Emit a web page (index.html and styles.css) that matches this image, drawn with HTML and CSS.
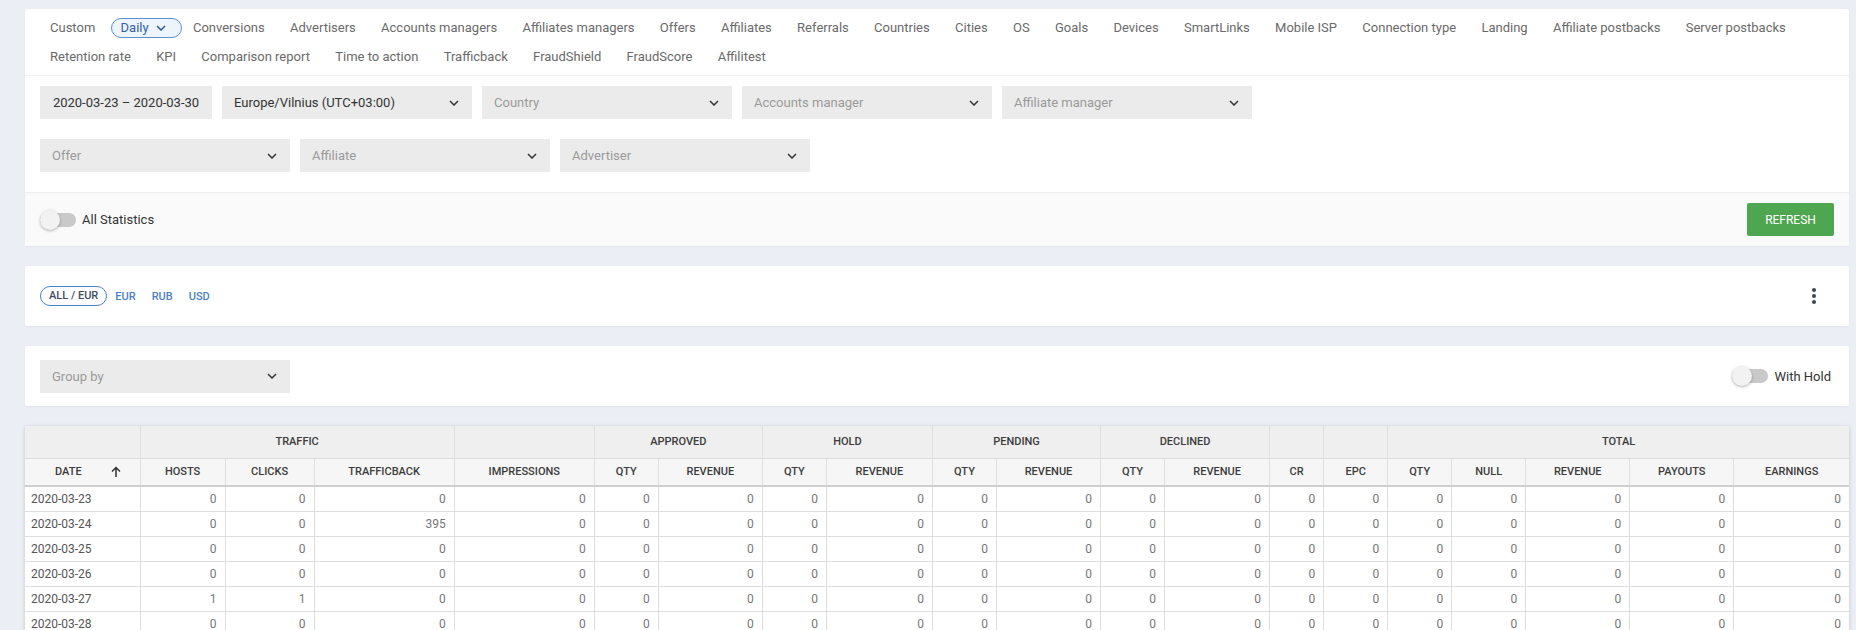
FILE: index.html
```html
<!DOCTYPE html>
<html>
<head>
<meta charset="utf-8">
<link rel="stylesheet" href="styles.css">
</head>
<body>
<div class="card top-card">
  <nav class="tabs">
    <span class="tab">Custom</span>
    <span class="tab tab-active">Daily <svg class="chev-sm" viewBox="0 0 10 6" width="10" height="6"><polyline points="1,1 5,5 9,1"/></svg></span>
    <span class="tab">Conversions</span>
    <span class="tab">Advertisers</span>
    <span class="tab">Accounts managers</span>
    <span class="tab">Affiliates managers</span>
    <span class="tab">Offers</span>
    <span class="tab">Affiliates</span>
    <span class="tab">Referrals</span>
    <span class="tab">Countries</span>
    <span class="tab">Cities</span>
    <span class="tab">OS</span>
    <span class="tab">Goals</span>
    <span class="tab">Devices</span>
    <span class="tab">SmartLinks</span>
    <span class="tab">Mobile ISP</span>
    <span class="tab">Connection type</span>
    <span class="tab">Landing</span>
    <span class="tab">Affiliate postbacks</span>
    <span class="tab">Server postbacks</span>
    <span class="tab">Retention rate</span>
    <span class="tab">KPI</span>
    <span class="tab">Comparison report</span>
    <span class="tab">Time to action</span>
    <span class="tab">Trafficback</span>
    <span class="tab">FraudShield</span>
    <span class="tab">FraudScore</span>
    <span class="tab">Affilitest</span>
  </nav>
  <div class="filters">
    <div class="filter-row">
      <div class="field field-date">2020-03-23 – 2020-03-30</div>
      <div class="field field-select"><span class="val">Europe/Vilnius (UTC+03:00)</span><svg class="chev" viewBox="0 0 10 6" width="10" height="6"><polyline points="1,1 5,5 9,1"/></svg></div>
      <div class="field field-select"><span class="ph">Country</span><svg class="chev" viewBox="0 0 10 6" width="10" height="6"><polyline points="1,1 5,5 9,1"/></svg></div>
      <div class="field field-select"><span class="ph">Accounts manager</span><svg class="chev" viewBox="0 0 10 6" width="10" height="6"><polyline points="1,1 5,5 9,1"/></svg></div>
      <div class="field field-select"><span class="ph">Affiliate manager</span><svg class="chev" viewBox="0 0 10 6" width="10" height="6"><polyline points="1,1 5,5 9,1"/></svg></div>
    </div>
    <div class="filter-row row2">
      <div class="field field-select"><span class="ph">Offer</span><svg class="chev" viewBox="0 0 10 6" width="10" height="6"><polyline points="1,1 5,5 9,1"/></svg></div>
      <div class="field field-select"><span class="ph">Affiliate</span><svg class="chev" viewBox="0 0 10 6" width="10" height="6"><polyline points="1,1 5,5 9,1"/></svg></div>
      <div class="field field-select"><span class="ph">Advertiser</span><svg class="chev" viewBox="0 0 10 6" width="10" height="6"><polyline points="1,1 5,5 9,1"/></svg></div>
    </div>
  </div>
  <div class="card-footer">
    <label class="toggle"><span class="switch"><span class="knob"></span></span><span class="toggle-label">All Statistics</span></label>
    <button class="btn-refresh">REFRESH</button>
  </div>
</div>

<div class="card bar-card">
  <div class="currencies">
    <span class="cur cur-active">ALL / EUR</span>
    <span class="cur">EUR</span>
    <span class="cur">RUB</span>
    <span class="cur">USD</span>
  </div>
  <div class="kebab"><i></i><i></i><i></i></div>
</div>

<div class="card bar-card group-card">
  <div class="field field-select"><span class="ph">Group by</span><svg class="chev" viewBox="0 0 10 6" width="10" height="6"><polyline points="1,1 5,5 9,1"/></svg></div>
  <label class="toggle"><span class="switch"><span class="knob"></span></span><span class="toggle-label">With Hold</span></label>
</div>

<div class="table-card">
  <table class="stats">
    <colgroup>
      <col style="width:115px"><col style="width:85px"><col style="width:89px"><col style="width:140px"><col style="width:140px">
      <col style="width:64px"><col style="width:104px"><col style="width:64px"><col style="width:106px"><col style="width:64px">
      <col style="width:104px"><col style="width:64px"><col style="width:105px"><col style="width:54px"><col style="width:64px">
      <col style="width:64px"><col style="width:74px"><col style="width:104px"><col style="width:104px"><col style="width:115px">
    </colgroup>
    <thead>
      <tr class="grp">
        <th></th>
        <th colspan="3">TRAFFIC</th>
        <th></th>
        <th colspan="2">APPROVED</th>
        <th colspan="2">HOLD</th>
        <th colspan="2">PENDING</th>
        <th colspan="2">DECLINED</th>
        <th></th>
        <th></th>
        <th colspan="5">TOTAL</th>
      </tr>
      <tr class="sub">
        <th class="date-h"><div class="date-inner"><span>DATE</span><svg class="sort" viewBox="0 0 10 12" width="10" height="12"><path d="M5 11V1.5M1 5.5L5 1.5L9 5.5"/></svg></div></th>
        <th>HOSTS</th><th>CLICKS</th><th>TRAFFICBACK</th><th>IMPRESSIONS</th>
        <th>QTY</th><th>REVENUE</th><th>QTY</th><th>REVENUE</th><th>QTY</th><th>REVENUE</th><th>QTY</th><th>REVENUE</th>
        <th>CR</th><th>EPC</th><th>QTY</th><th>NULL</th><th>REVENUE</th><th>PAYOUTS</th><th>EARNINGS</th>
      </tr>
    </thead>
    <tbody>
      <tr><td>2020-03-23</td><td>0</td><td>0</td><td>0</td><td>0</td><td>0</td><td>0</td><td>0</td><td>0</td><td>0</td><td>0</td><td>0</td><td>0</td><td>0</td><td>0</td><td>0</td><td>0</td><td>0</td><td>0</td><td>0</td></tr>
      <tr><td>2020-03-24</td><td>0</td><td>0</td><td>395</td><td>0</td><td>0</td><td>0</td><td>0</td><td>0</td><td>0</td><td>0</td><td>0</td><td>0</td><td>0</td><td>0</td><td>0</td><td>0</td><td>0</td><td>0</td><td>0</td></tr>
      <tr><td>2020-03-25</td><td>0</td><td>0</td><td>0</td><td>0</td><td>0</td><td>0</td><td>0</td><td>0</td><td>0</td><td>0</td><td>0</td><td>0</td><td>0</td><td>0</td><td>0</td><td>0</td><td>0</td><td>0</td><td>0</td></tr>
      <tr><td>2020-03-26</td><td>0</td><td>0</td><td>0</td><td>0</td><td>0</td><td>0</td><td>0</td><td>0</td><td>0</td><td>0</td><td>0</td><td>0</td><td>0</td><td>0</td><td>0</td><td>0</td><td>0</td><td>0</td><td>0</td></tr>
      <tr><td>2020-03-27</td><td>1</td><td>1</td><td>0</td><td>0</td><td>0</td><td>0</td><td>0</td><td>0</td><td>0</td><td>0</td><td>0</td><td>0</td><td>0</td><td>0</td><td>0</td><td>0</td><td>0</td><td>0</td><td>0</td></tr>
      <tr><td>2020-03-28</td><td>0</td><td>0</td><td>0</td><td>0</td><td>0</td><td>0</td><td>0</td><td>0</td><td>0</td><td>0</td><td>0</td><td>0</td><td>0</td><td>0</td><td>0</td><td>0</td><td>0</td><td>0</td><td>0</td></tr>
    </tbody>
  </table>
</div>
</body>
</html>
```
FILE: styles.css
```css
* { box-sizing: border-box; }
html, body { height: 630px; overflow: hidden; }
body {
  margin: 0;
  padding: 9px 7px 0 25px;
  background: #eceef5;
  font-family: Roboto, "Liberation Sans", Arial, sans-serif;
  color: #333;
}

.card {
  background: #fff;
  border-radius: 2px;
  box-shadow: 0 1px 2px rgba(40, 50, 80, 0.05);
}

/* tabs */
.tabs {
  display: flex;
  flex-wrap: wrap;
  column-gap: 11.3px;
  padding: 4px 18px 4px 18px;
}
.tab {
  font-size: 13px;
  line-height: 29px;
  color: #6a6a6a;
  padding: 0 7px;
  white-space: nowrap;
}
.tab-active {
  display: inline-flex;
  align-items: center;
  align-self: center;
  height: 20px;
  line-height: 18px;
  padding: 0 15px 0 9px;
  margin-left: -3px;
  margin-right: -7px;
  border: 1px solid #5b8fd4;
  border-radius: 10px;
  background: #eef4fc;
  color: #2f61a8;
}
.chev-sm {
  margin-left: 7px;
  fill: none;
  stroke: #2f61a8;
  stroke-width: 1.6;
}

/* filters */
.filters {
  border-top: 1px solid #efefef;
  padding: 10px 15px 20px;
}
.filter-row {
  display: flex;
  gap: 10px;
}
.row2 { margin-top: 20px; }
.field {
  height: 33px;
  background: #ebebeb;
  font-size: 13px;
  display: flex;
  align-items: center;
}
.field-date {
  width: 172px;
  justify-content: center;
  color: #333;
}
.field-select {
  width: 250px;
  justify-content: space-between;
  padding: 0 13px 0 12px;
}
.field-select .val { color: #333; }
.field-select .ph { color: #9a9a9a; }
.chev {
  fill: none;
  stroke: #333;
  stroke-width: 1.5;
}

.card-footer {
  background: #fafafa;
  border-top: 1px solid #eeeeee;
  height: 54px;
  padding: 0 15px;
  display: flex;
  align-items: center;
  justify-content: space-between;
}

/* toggle */
.toggle {
  display: flex;
  align-items: center;
  gap: 6px;
}
.switch {
  position: relative;
  width: 36px;
  height: 14px;
  border-radius: 7px;
  background: #c9c9c9;
}
.knob {
  position: absolute;
  left: 0;
  top: -3px;
  width: 20px;
  height: 20px;
  border-radius: 50%;
  background: #f2f2f2;
  box-shadow: 0 1px 3px rgba(0, 0, 0, 0.3);
}
.toggle-label {
  font-size: 13px;
  color: #333;
}

.btn-refresh {
  width: 87px;
  height: 33px;
  border: none;
  border-radius: 2px;
  background: #4fa650;
  color: #fff;
  font-family: inherit;
  font-size: 12px;
  padding: 0;
}

/* currency bar */
.bar-card {
  margin-top: 20px;
  height: 60px;
  padding: 0 15px;
  display: flex;
  align-items: center;
  justify-content: space-between;
}
.currencies {
  display: flex;
  align-items: center;
  gap: 8px;
}
.cur {
  font-size: 11px;
  font-weight: 500;
  color: #4a80c8;
}
.cur + .cur + .cur { margin-left: 8px; }
.cur-active {
  height: 20px;
  line-height: 18px;
  padding: 0 8px;
  border: 1px solid #4a80c8;
  border-radius: 10px;
  color: #3d4c66;
}
.kebab {
  display: flex;
  flex-direction: column;
  gap: 2px;
  margin-right: 18px;
}
.kebab i {
  display: block;
  width: 4px;
  height: 4px;
  border-radius: 50%;
  background: #3e4654;
}
.group-card {
  padding-right: 18px;
}

/* table */
.table-card {
  margin-top: 20px;
  width: 1824px;
  background: #fff;
  box-shadow: 0 1px 4px rgba(0, 0, 0, 0.18);
}
.stats {
  width: 1824px;
  table-layout: fixed;
  border-collapse: collapse;
  font-size: 12px;
}
.stats th {
  font-size: 11px;
  font-weight: 500;
  color: #3c3c3c;
  text-align: center;
  border: 1px solid #dedede;
  border-top: none;
  padding: 0 4px;
}
.stats tr.grp th {
  height: 32px;
  background: #efefef;
}
.stats tr.sub th {
  height: 28px;
  background: #f6f6f6;
  border-bottom: 2px solid #cfcfcf;
}
.stats th:first-child, .stats td:first-child { border-left: none; }
.stats th:last-child, .stats td:last-child { border-right: none; }
.stats th.date-h { padding: 0; }
.date-inner {
  display: flex;
  align-items: center;
  justify-content: space-between;
  padding: 0 19px 0 30px;
}
.sort {
  fill: none;
  stroke: #333;
  stroke-width: 1.5;
}
.stats td {
  height: 25px;
  padding: 0 8px;
  text-align: right;
  color: #777;
  border: 1px solid #dedede;
}
.stats td:first-child {
  text-align: left;
  padding-left: 6px;
  color: #555;
}
```
